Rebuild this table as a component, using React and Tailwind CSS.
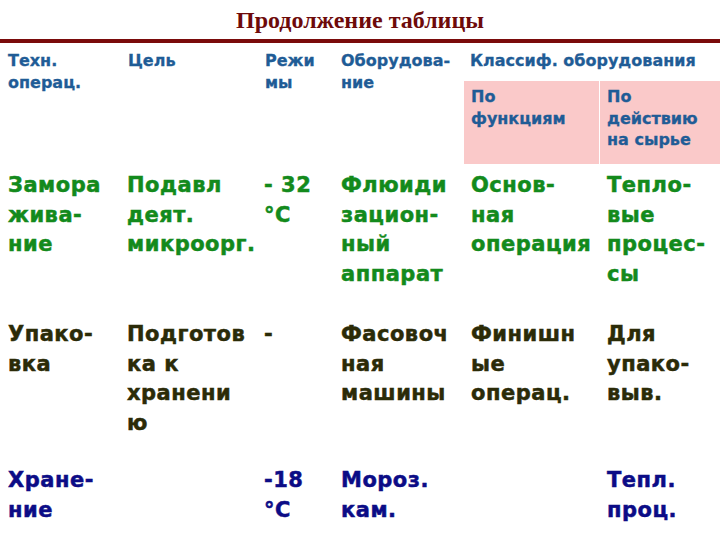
import React from "react";

const body =
  "font-['DejaVu_Sans',Verdana,sans-serif] font-bold text-[21px] leading-[29.5px] tracking-[0.5px] [-webkit-text-stroke:0.5px_currentColor]";
const head =
  "font-['DejaVu_Sans',Verdana,sans-serif] font-bold text-[16px] leading-[21.5px] text-[#1f5c96] [-webkit-text-stroke:0.3px_currentColor]";

const rows = [
  {
    color: "text-[#138a1c]",
    pad: "pt-[7px] pb-[31px]",
    cells: [
      ["Замора", "жива-", "ние"],
      ["Подавл", "деят.", "микроорг."],
      ["- 32", "°C"],
      ["Флюиди", "зацион-", "ный", "аппарат"],
      ["Основ-", "ная", "операция"],
      ["Тепло-", "вые", "процес-", "сы"],
    ],
  },
  {
    color: "text-[#2b2b08]",
    pad: "pt-0 pb-[28px]",
    cells: [
      ["Упако-", "вка"],
      ["Подготов", "ка к", "хранени", "ю"],
      ["-"],
      ["Фасовоч", "ная", "машины"],
      ["Финишн", "ые", "операц."],
      ["Для", "упако-", "выв."],
    ],
  },
  {
    color: "text-[#0c0c86]",
    pad: "pt-0 pb-0",
    cells: [
      ["Хране-", "ние"],
      [],
      ["-18", "°C"],
      ["Мороз.", "кам."],
      [],
      ["Тепл.", "проц."],
    ],
  },
];

const Lines = ({ lines }) => (
  <>
    {lines.map((l, i) => (
      <div key={i} className="whitespace-nowrap">
        {l}
      </div>
    ))}
  </>
);

export default function App() {
  return (
    <div className="w-[720px] h-[540px] bg-white overflow-hidden">
      <h1 className="h-[39px] pt-[6px] text-center font-['Liberation_Serif',serif] font-bold text-[24px] leading-[28px] text-[#6e0a0a]">
        Продолжение таблицы
      </h1>
      <div className="h-[4px] bg-[#7a0b0b]" />

      <div className="grid grid-cols-[120px_137px_77px_130px_136px_120px]">
        {/* header */}
        <div className={`${head} row-span-2 pl-2 pt-[7px]`}>
          <Lines lines={["Техн.", "операц."]} />
        </div>
        <div className={`${head} row-span-2 pl-2 pt-[7px]`}>
          <Lines lines={["Цель"]} />
        </div>
        <div className={`${head} row-span-2 pl-2 pt-[7px]`}>
          <Lines lines={["Режи", "мы"]} />
        </div>
        <div className={`${head} row-span-2 pl-[7px] pt-[7px]`}>
          <Lines lines={["Оборудова-", "ние"]} />
        </div>
        <div className={`${head} col-span-2 pl-[6px] pt-[7px] h-[38px]`}>
          <Lines lines={["Классиф. оборудования"]} />
        </div>
        <div className={`${head} bg-[#fac9c9] h-[83px] pl-[7px] pt-[5px] border-r border-white`}>
          <Lines lines={["По", "функциям"]} />
        </div>
        <div className={`${head} bg-[#fac9c9] h-[83px] pl-[7px] pt-[5px]`}>
          <Lines lines={["По", "действию", "на сырье"]} />
        </div>

        {/* body */}
        {rows.map((r, ri) =>
          r.cells.map((c, ci) => (
            <div
              key={`${ri}-${ci}`}
              className={`${body} ${r.color} ${r.pad} ${ci === 0 ? "pl-2" : "pl-[7px]"}`}
            >
              <Lines lines={c} />
            </div>
          ))
        )}
      </div>
    </div>
  );
}
